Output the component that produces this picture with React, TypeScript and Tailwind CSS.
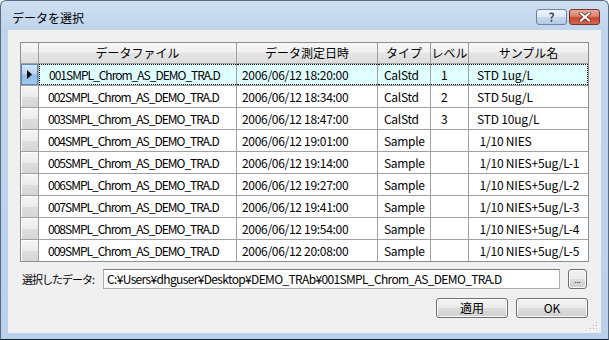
import React from 'react'

const ROWS = [
  ['001SMPL_Chrom_AS_DEMO_TRA.D', '2006/06/12 18:20:00', 'CalStd', '1', 'STD 1ug/L'],
  ['002SMPL_Chrom_AS_DEMO_TRA.D', '2006/06/12 18:34:00', 'CalStd', '2', 'STD 5ug/L'],
  ['003SMPL_Chrom_AS_DEMO_TRA.D', '2006/06/12 18:47:00', 'CalStd', '3', 'STD 10ug/L'],
  ['004SMPL_Chrom_AS_DEMO_TRA.D', '2006/06/12 19:01:00', 'Sample', '', ' 1/10 NIES'],
  ['005SMPL_Chrom_AS_DEMO_TRA.D', '2006/06/12 19:14:00', 'Sample', '', ' 1/10 NIES+5ug/L-1'],
  ['006SMPL_Chrom_AS_DEMO_TRA.D', '2006/06/12 19:27:00', 'Sample', '', ' 1/10 NIES+5ug/L-2'],
  ['007SMPL_Chrom_AS_DEMO_TRA.D', '2006/06/12 19:41:00', 'Sample', '', ' 1/10 NIES+5ug/L-3'],
  ['008SMPL_Chrom_AS_DEMO_TRA.D', '2006/06/12 19:54:00', 'Sample', '', ' 1/10 NIES+5ug/L-4'],
  ['009SMPL_Chrom_AS_DEMO_TRA.D', '2006/06/12 20:08:00', 'Sample', '', ' 1/10 NIES+5ug/L-5'],
]

const HEADERS = ['データファイル', 'データ測定日時', 'タイプ', 'レベル', 'サンプル名']
// per-column padding and tracking so the text widths follow the narrow UI font of the original
const CELL = [
  'pl-[9px] tracking-[-1px]',
  'pl-[5px] tracking-[-0.3px]',
  'pl-[6px] tracking-[-0.3px]',
  'pl-[10px]',
  'pl-[8px] tracking-[-0.2px]',
]

const headerBg = 'bg-[linear-gradient(#f7f7f7_0%,#f1f1f1_45%,#e5e5e5_50%,#dcdcdc_100%)]'
const btnBg = 'bg-[linear-gradient(#f2f2f2_0%,#ebebeb_50%,#dddddd_51%,#cfcfcf_100%)]'

function WinButton({ label, className = '' }: { label: string; className?: string }) {
  return (
    <div className={`h-[20px] rounded-[3px] border border-[#707070] ${btnBg} shadow-[inset_0_0_0_1px_#fcfcfc] flex items-center justify-center text-[12px] leading-none ${className}`}>
      {label}
    </div>
  )
}

export default function App() {
  return (
    <div className="w-[609px] h-[340px] font-['Noto_Sans_CJK_JP','Noto_Sans',sans-serif] text-black select-none">
      <div className="w-full h-full flex flex-col rounded-t-[6px] border border-[#5a6b80] border-b-[#1c2430] bg-[linear-gradient(#cddff2_0px,#bfd5ec_30px,#b9d1ea_100%)] px-[7px] pb-[6px]">
        {/* Title bar */}
        <div className="h-[29px] flex items-start shrink-0">
          <div className="pl-[4px] pt-[9px] text-[12px] leading-[16px]">データを選択</div>
          <div className="ml-auto flex gap-[2px] pt-[8px] pr-[1px]">
            <div className="w-[31px] h-[16px] rounded-[3px] border border-[#6f839c] bg-[linear-gradient(#eef4fb_0%,#dde8f5_50%,#c6d8ee_51%,#b4cbe6_100%)] flex items-center justify-center">
              <span className="text-[12px] font-bold leading-none text-[#3b4a5e] [text-shadow:0_0_2px_#ffffff]">?</span>
            </div>
            <div className="w-[31px] h-[16px] rounded-[3px] border border-[#7d3126] bg-[linear-gradient(#e9a99c_0%,#dc7f6c_45%,#c9462f_55%,#d5684f_100%)] flex items-center justify-center">
              <svg width="14" height="10" viewBox="0 0 14 10">
                <path d="M3 1.5 L11 8.5 M11 1.5 L3 8.5" stroke="#5a231b" strokeWidth="3.6" strokeLinecap="square" />
                <path d="M3 1.5 L11 8.5 M11 1.5 L3 8.5" stroke="#ffffff" strokeWidth="2.2" strokeLinecap="square" />
              </svg>
            </div>
          </div>
        </div>

        {/* Client area */}
        <div className="flex-1 flex flex-col bg-[#f0f0f0] pt-[12px] px-[12px] relative">
          {/* Grid */}
          <div className="grid grid-cols-[17px_197px_140px_52px_37px_119px] grid-rows-[20px_repeat(9,21px)] gap-px bg-[#a0a0a0] border border-[#8a8f96] w-[569px]">
            <div className={headerBg} />
            {HEADERS.map(h => (
              <div key={h} className={`${headerBg} flex items-center justify-center text-[12px] leading-none`}>{h}</div>
            ))}
            {ROWS.map((r, i) => (
              <React.Fragment key={i}>
                {i === 0 ? (
                  <div className="bg-[linear-gradient(#dcebf8_0%,#b6d3ef_45%,#8fbce6_55%,#a6cbed_100%)] shadow-[inset_0_0_0_1px_#5b8ac0] flex items-center justify-center">
                    <svg width="5" height="9" viewBox="0 0 5 9"><path d="M0 0 L5 4.5 L0 9 Z" fill="#000" /></svg>
                  </div>
                ) : (
                  <div className="bg-[linear-gradient(#f5f5f5_0%,#ececec_50%,#dedede_51%,#d6d6d6_100%)] shadow-[inset_1px_1px_0_#ffffff]" />
                )}
                {r.map((c, j) => (
                  <div
                    key={j}
                    className={`${CELL[j]} flex items-center text-[12px] leading-none whitespace-pre overflow-hidden ${
                      i === 0
                        ? `bg-[#e0ffff] border-t border-b border-dotted border-black ${j === 0 ? 'border-l' : ''} ${j === 4 ? 'border-r' : ''}`
                        : 'bg-white'
                    }`}
                  >
                    {c}
                  </div>
                ))}
              </React.Fragment>
            ))}
          </div>

          {/* Selected data path */}
          <div className="mt-[7px] flex items-center h-[20px]">
            <div className="w-[83px] pl-[2px] text-[11px] leading-none tracking-[-1px] whitespace-nowrap">選択したデータ:</div>
            <div className="w-[457px] h-[20px] border border-[#abadb3] border-t-[#7a7a7a] bg-white flex items-center pl-[3px] text-[12px] leading-none tracking-[-0.65px] whitespace-nowrap overflow-hidden">
              C:¥Users¥dhguser¥Desktop¥DEMO_TRAb¥001SMPL_Chrom_AS_DEMO_TRA.D
            </div>
            <div className={`ml-[8px] w-[19px] h-[20px] rounded-[3px] border border-[#707070] ${btnBg} shadow-[inset_0_0_0_1px_#fcfcfc] flex items-end justify-center pb-[4px]`}>
              <span className="text-[8px] leading-none">...</span>
            </div>
          </div>

          {/* Buttons */}
          <div className="mt-[9px] flex justify-end gap-[8px] pr-[1px]">
            <WinButton label="適用" className="w-[72px]" />
            <WinButton label="OK" className="w-[72px]" />
          </div>

          {/* Resize grip */}
          <svg className="absolute right-[2px] bottom-[2px]" width="10" height="10" viewBox="0 0 10 10">
            {[[8, 2], [8, 5], [5, 5], [8, 8], [5, 8], [2, 8]].map(([x, y], k) => (
              <React.Fragment key={k}>
                <rect x={x} y={y} width="1" height="1" fill="#ffffff" />
                <rect x={x - 1} y={y - 1} width="1" height="1" fill="#b0b0b0" />
              </React.Fragment>
            ))}
          </svg>
        </div>
      </div>
    </div>
  )
}
